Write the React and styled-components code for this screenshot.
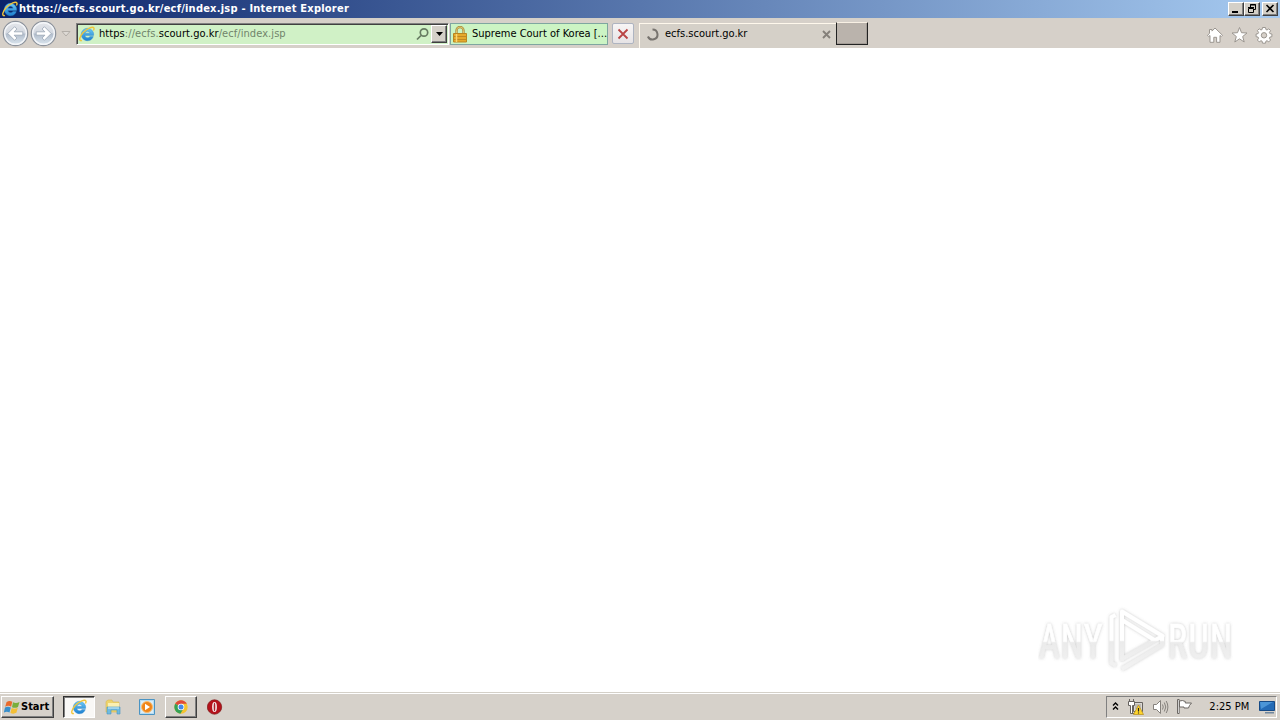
import React from 'react';
import styled, {createGlobalStyle} from "styled-components";

const GlobalStyle = createGlobalStyle`
  * {
    box-sizing: border-box;
  }

  body {
    margin: 0;
    overflow: hidden;
    background: #fff;
    font-family: "DejaVu Sans Condensed", "DejaVu Sans", sans-serif;
    font-stretch: condensed;
    font-size: 11px;
    color: #000;
  }

  svg {
    display: block;
    flex: none;
  }
`

const Desktop = styled.div`
  width: 1280px;
  height: 720px;
  display: flex;
  flex-direction: column;
`

const Text = styled.span`
  white-space: pre;
  line-height: 14px;
  font-weight: ${p => p.$bold ? 'bold' : 'normal'};
  letter-spacing: ${p => p.$spacing || 0}px;
  color: ${p => p.$color || 'inherit'};
`

const TitleBar = styled.div`
  height: 18px;
  flex: none;
  display: flex;
  align-items: center;
  gap: 1px;
  padding: 0 2px;
  background: linear-gradient(to right, #0a246a, #a6caf0);
  color: #fff;
`

const WindowButtons = styled.div`
  margin-left: auto;
  display: flex;
`

const WindowButton = styled.div`
  width: 16px;
  height: 14px;
  margin-left: ${p => p.$gap || 0}px;
  background: #d4d0c8;
  border: 1px solid;
  border-color: #fff #404040 #404040 #fff;
  box-shadow: inset -1px -1px #808080;
`

const Toolbar = styled.div`
  height: 30px;
  flex: none;
  display: flex;
  align-items: flex-start;
  padding: 4px 7px 0 2px;
  background: #d6d0c9;
  border-top: 1px solid #d4d0c8;
`

const NavButtons = styled.div`
  display: flex;
  gap: 1px;
  width: 74px;
  margin-top: -3px;
`

const AddressBar = styled.div`
  width: 373px;
  height: 22px;
  display: flex;
  align-items: center;
  padding-left: 2px;
  background: #d0f1c6;
  border: 1px solid;
  border-color: #808080 #fff #fff #808080;
  box-shadow: inset 1px 1px #404040;
`

const Url = styled.div`
  flex: 1;
  display: flex;
  padding: 0 0 0 4px;
`

const DropButton = styled.div`
  width: 16px;
  height: 18px;
  margin: 0 1px 0 1px;
  display: flex;
  align-items: center;
  justify-content: center;
  background: #d4d0c8;
  border: 1px solid;
  border-color: #fff #404040 #404040 #fff;
  box-shadow: inset -1px -1px #808080;
`

const Certificate = styled.div`
  width: 158px;
  height: 22px;
  margin-left: 1px;
  padding-left: 2px;
  display: flex;
  align-items: center;
  gap: 5px;
  background: #ccf4c4;
  border: 1px solid #7fa6a0;
`

const StopButton = styled.div`
  width: 22px;
  height: 21px;
  margin-left: 4px;
  display: flex;
  align-items: center;
  justify-content: center;
  background: linear-gradient(#f7f5f5, #e6e3e5);
  border: 1px solid #aeb4c1;
  border-radius: 2px;
`

const Tab = styled.div`
  width: 197px;
  height: 25px;
  margin-left: 5px;
  padding: 0 5px 4px 6px;
  display: flex;
  align-items: center;
  background: #d5d0c8;
  border-left: 1px solid #fff8ec;
  border-top: 1px solid #fff8ec;
`

const TabTitle = styled.div`
  flex: 1;
  display: flex;
  padding-left: 6px;
`

const NewTab = styled.div`
  width: 32px;
  height: 23px;
  margin-top: -1px;
  background: #bab3ac;
  border: 1px solid;
  border-color: #f8f0e4 #222 #222 #222;
  box-shadow: inset -1px -1px #a39c96;
`

const ToolIcons = styled.div`
  margin: 3px 0 0 auto;
  display: flex;
  gap: 7px;
`

const Page = styled.div`
  flex: 1;
  background: #fff;
  display: flex;
  justify-content: flex-end;
  align-items: flex-end;
  padding: 0 38px 14px 0;
`

const Taskbar = styled.div`
  height: 28px;
  flex: none;
  display: flex;
  align-items: center;
  padding: 2px 3px 2px 1px;
  background: #d6d1ca;
  border-top: 1px solid #d4d0c8;
  box-shadow: inset 0 1px #fff;
`

const StartButton = styled.div`
  width: 53px;
  height: 22px;
  display: flex;
  align-items: center;
  gap: 1px;
  padding-left: 2px;
  border: 1px solid;
  border-color: #fff #404040 #404040 #fff;
  box-shadow: inset -1px -1px #808080;
`

const Launchers = styled.div`
  display: flex;
  margin-left: 9px;
`

const Launcher = styled.div`
  width: 32px;
  height: 22px;
  margin-right: 2px;
  display: flex;
  align-items: center;
  justify-content: center;
  background: ${p => p.$state === 'active' ? '#f9f8f6' : 'none'};
  border: 1px solid transparent;
  border-color: ${p => ({
    active: '#303030 #fff #fff #303030',
    open: '#fff #404040 #404040 #fff'
})[p.$state]};
  box-shadow: ${p => p.$state === 'open' ? 'inset -1px -1px #808080' : p.$state ? 'inset 1px 1px #808080' : 'none'};
`

const Tray = styled.div`
  width: 171px;
  height: 22px;
  margin-left: auto;
  display: flex;
  align-items: center;
  padding: 0 1px 0 5px;
  border: 1px solid;
  border-color: #808080 #fff #fff #808080;
`

const TrayIcons = styled.div`
  display: flex;
  align-items: center;
  gap: 7px;
  width: 98px;
`

const Clock = styled.div`
  display: flex;
  width: 50px;
`

function IeIcon() {
    return (
        <svg width="16" height="16" viewBox="0 0 16 16">
            <defs>
                <linearGradient id="ie" x2="0" y2="1">
                    <stop stopColor="#6cc9f5"/>
                    <stop offset="1" stopColor="#1c7fd0"/>
                </linearGradient>
            </defs>
            <path d="M14.3 10.6H11a2.9 2.9 0 0 1-5.2-1.2h8.8A6.2 6.2 0 1 0 14.3 10.6ZM5.9 7.2a2.8 2.8 0 0 1 5.3 0Z" fill="url(#ie)" fillRule="evenodd" stroke="#2b86c9" strokeWidth=".4"/>
            <path d="M2.9 14.5C-.5 15.4.3 10.8 4.2 6.5 8.5 1.9 14 .1 14.9 2c.3.8 0 1.7-.5 2.5" fill="none" stroke="#f2c53a" strokeWidth="1.4"/>
        </svg>
    )
}

function NavArrow({flip}) {
    return (
        <svg width="27" height="27" viewBox="0 0 27 27">
            <defs>
                <linearGradient id="disc" x2="0" y2="1">
                    <stop stopColor="#e6e8ec"/>
                    <stop offset=".48" stopColor="#d3d8e0"/>
                    <stop offset=".52" stopColor="#b2bdcc"/>
                    <stop offset="1" stopColor="#dfeaf2"/>
                </linearGradient>
            </defs>
            <g transform={flip ? "translate(27 0) scale(-1 1)" : undefined}>
                <circle cx="13.5" cy="13.5" r="12.2" fill="url(#disc)" stroke="#8d939c" strokeWidth="1.2"/>
                <circle cx="13.5" cy="13.5" r="10.8" fill="none" stroke="#f4f6f9" strokeWidth="1.4"/>
                <path d="M5.8 13.5 12.6 6.7l2.3 2.3-2.8 2.8h8.7v3.4h-8.7l2.8 2.8-2.3 2.3Z" fill="#fff" stroke="#98a4b4" strokeWidth=".8"/>
            </g>
        </svg>
    )
}

function LockIcon() {
    return (
        <svg width="14" height="17" viewBox="0 0 14 17">
            <path d="M3.5 8V4.5a3.5 3.5 0 0 1 7 0V8" fill="none" stroke="#a58a3c" strokeWidth="2.3"/>
            <path d="M3.5 8V4.5a3.5 3.5 0 0 1 7 0V8" fill="none" stroke="#e6cc70" strokeWidth=".9"/>
            <path d="M.5 7.5h13v8.5H.5Z" fill="#e5a92c" stroke="#b9861f"/>
            <path d="M1 10.5h12M1 13.5h12" stroke="#c08820"/>
            <path d="M3.5 8v8" stroke="#f8d672" strokeWidth="1.5"/>
        </svg>
    )
}

function Watermark() {
    return (
        <svg width="204" height="74" viewBox="0 0 204 74">
            <defs>
                <linearGradient id="mark" y1="0" x2="0" y2="74" gradientUnits="userSpaceOnUse">
                    <stop offset=".49" stopColor="#fff"/>
                    <stop offset=".51" stopColor="#ebebeb"/>
                    <stop offset="1" stopColor="#f5f5f5"/>
                </linearGradient>
                <linearGradient id="letters" y1="-53" x2="0" y2="21" gradientUnits="userSpaceOnUse">
                    <stop offset=".49" stopColor="#fff"/>
                    <stop offset=".51" stopColor="#ebebeb"/>
                    <stop offset="1" stopColor="#f5f5f5"/>
                </linearGradient>
                <filter id="glow" x="-10%" y="-20%" width="120%" height="140%">
                    <feDropShadow dx="0" dy="0" stdDeviation="1.6" floodColor="#777" floodOpacity=".42"/>
                </filter>
            </defs>
            <g filter="url(#glow)">
                <g fill="url(#letters)" stroke="url(#letters)" strokeWidth=".7" fontFamily="Roboto" fontSize="49">
                    <text transform="translate(1 54) scale(.73 1)" textLength="87">ANY</text>
                    <text transform="translate(130 54) scale(.73 1)" textLength="88">RUN</text>
                </g>
                <g fill="none" stroke="url(#mark)" strokeWidth="4" strokeLinejoin="round">
                    <path d="M84 57V7.5L124.500 32 84 55"/>
                    <path d="M77.500 11 73.500 13v46l4.500 2.500M84 16l34 21M84 65l40-24v-8"/>
                </g>
            </g>
        </svg>
    )
}

function App() {
    return (
        <Desktop>
            <GlobalStyle />
            <TitleBar>
                <IeIcon />
                <Text $bold $spacing={0.22}>https://ecfs.scourt.go.kr/ecf/index.jsp - Internet Explorer</Text>
                <WindowButtons>
                    <WindowButton>
                        <svg width="14" height="12"><path d="M3 8h6v2H3Z"/></svg>
                    </WindowButton>
                    <WindowButton>
                        <svg width="14" height="12" fill="none" stroke="#000">
                            <path d="M5.5 4V1.5h5v5H9M5 2h6M3.5 5.5h5v4h-5ZM3 4.5h6"/>
                        </svg>
                    </WindowButton>
                    <WindowButton $gap={2}>
                        <svg width="14" height="12"><path d="m3.5 2 7 7m0-7-7 7" stroke="#000" strokeWidth="1.6"/></svg>
                    </WindowButton>
                </WindowButtons>
            </TitleBar>
            <Toolbar>
                <NavButtons>
                    <NavArrow />
                    <NavArrow flip />
                    <svg width="15" height="27"><path d="M4 11.500h8L8 16Z" fill="#dedad5" stroke="#b3aea8"/></svg>
                </NavButtons>
                <AddressBar>
                    <IeIcon />
                    <Url>
                        <Text $spacing={0.07}>https</Text>
                        <Text $spacing={0.07} $color="#71846b">://ecfs.</Text>
                        <Text $spacing={0.07}>scourt.go.kr</Text>
                        <Text $spacing={0.07} $color="#71846b">/ecf/index.jsp</Text>
                    </Url>
                    <svg width="15" height="15" fill="none" stroke="#667b61" strokeWidth="1.7">
                        <circle cx="9" cy="5.5" r="3.7"/>
                        <path d="m6 8.5-4 4"/>
                    </svg>
                    <DropButton>
                        <svg width="7" height="4"><path d="M0 0h7L3.5 4Z"/></svg>
                    </DropButton>
                </AddressBar>
                <Certificate>
                    <LockIcon />
                    <Text>Supreme Court of Korea [...</Text>
                </Certificate>
                <StopButton>
                    <svg width="12" height="12"><path d="m1.5 1.5 9 9m0-9-9 9" stroke="#b94444" strokeWidth="1.8"/></svg>
                </StopButton>
                <Tab>
                    <svg width="13" height="13"><path d="M6.5 1.5a5 5 0 1 1-4.6 7" fill="none" stroke="#77736e" strokeWidth="2"/></svg>
                    <TabTitle><Text>ecfs.scourt.go.kr</Text></TabTitle>
                    <svg width="9" height="9"><path d="m1 1 7 7m0-7L1 8" stroke="#85807a" strokeWidth="1.9"/></svg>
                </Tab>
                <NewTab />
                <ToolIcons>
                    <svg width="18" height="18" fill="#fff" stroke="#9b9690">
                        <path d="m1.5 9.3 2-1.9V3.5H6v1.6L9 2l7.5 7.3-1.2 1.2-1.3-1v6.8h-3.4v-5H7.8v5H4v-6.8l-1.3 1Z"/>
                    </svg>
                    <svg width="17" height="18" fill="#fff" stroke="#9b9690">
                        <path d="m8.5 1.500 2 5.2 5.5.3-4.3 3.5 1.5 5.5-4.7-3.2L3.8 16l1.5-5.5L1 7l5.5-.3Z"/>
                    </svg>
                    <svg width="18" height="18" viewBox="0 0 18 18" fill="#fff" stroke="#9b9690">
                        <path d="M7.5 1.5h3l.4 2 1.1.5 1.8-1.2 1.8 1.8-1.200 1.900.5 1.100 2 .4v2.700l-2 .4-.5 1.200 1.200 1.700-1.800 1.900-1.800-1.200-1.100.5-.4 2h-3l-.4-2-1.100-.5-1.800 1.200-1.800-1.900 1.200-1.700-.5-1.200-2-.4V8l2-.4.5-1.100-1.200-1.900 1.800-1.800L6 4l1.100-.5Z"/>
                        <circle cx="9" cy="9.300" r="2.700" fill="#d6d0c9"/>
                    </svg>
                </ToolIcons>
            </Toolbar>
            <Page>
                <Watermark />
            </Page>
            <Taskbar>
                <StartButton>
                    <svg width="16" height="16" viewBox="0 0 16 16">
                        <path d="M2.600 3q3-2.100 5.700-.2L7.100 7.700Q4.600 5.900 1.200 7.700Z" fill="#e96a2b"/>
                        <path d="M9 3.200q2.800 1.500 6.500-.2L14 8q-3.100 1.600-6 .2Z" fill="#79ae3c"/>
                        <path d="M1 8.500q3-1.700 5.800 0l-1.300 5Q2.800 12-.2 13.500Z" fill="#388fcb"/>
                        <path d="M7.700 9q3 1.500 6.100-.2l-1.400 5q-3 1.600-6 .1Z" fill="#f3bf36"/>
                    </svg>
                    <Text $bold>Start</Text>
                </StartButton>
                <Launchers>
                    <Launcher $state="active"><IeIcon /></Launcher>
                    <Launcher>
                        <svg width="16" height="16" viewBox="0 0 16 16">
                            <path d="M1 2.5 3 1h4l1 2h6v10H1Z" fill="#edd36d" stroke="#d8ba50" strokeWidth=".6"/>
                            <path d="M3 4h11v5H3Z" fill="#faf0b2"/>
                            <path d="M2 8h13v7h-3v-4H6v4H2Z" fill="#6fbbe0" stroke="#4795bf" strokeWidth=".6"/>
                            <path d="M3 9h11" stroke="#d4f0fa"/>
                        </svg>
                    </Launcher>
                    <Launcher>
                        <svg width="16" height="16" viewBox="0 0 16 16">
                            <path d="M.5.5h15v15H.5Z" fill="#b7dcf2" stroke="#4b94c3"/>
                            <path d="M2 2h12v12H2Z" fill="#d9edf8"/>
                            <circle cx="8" cy="8" r="5.500" fill="#ef8519" stroke="#fbbd70"/>
                            <path d="m6 4.7 5 3.3-5 3.3Z" fill="#fff"/>
                        </svg>
                    </Launcher>
                    <Launcher $state="open">
                        <svg width="16" height="16" viewBox="0 0 16 16">
                            <circle cx="8" cy="8" r="6.7" fill="#f4c430"/>
                            <path d="M8 8 2.2 4.7A6.7 6.7 0 0 1 13.8 4.7H8Z" fill="#df493b"/>
                            <path d="M2.2 4.7A6.7 6.7 0 0 0 7.4 14.7L10.5 9.5 8 8Z" fill="#35a155"/>
                            <circle cx="8" cy="8" r="3.3" fill="#fff"/>
                            <circle cx="8" cy="8" r="2.5" fill="#4388e9"/>
                        </svg>
                    </Launcher>
                    <Launcher>
                        <svg width="16" height="16" viewBox="0 0 16 16">
                            <circle cx="7.500" cy="8" r="7.2" fill="#b5121b" stroke="#7c1515" strokeWidth=".7"/>
                            <ellipse cx="7.500" cy="8" rx="2.4" ry="5" fill="#f7eeee"/>
                            <ellipse cx="7.500" cy="8" rx=".8" ry="4.2" fill="#a8202a"/>
                        </svg>
                    </Launcher>
                </Launchers>
                <Tray>
                    <TrayIcons>
                        <svg width="8" height="10" fill="none" stroke="#000" strokeWidth="1.4"><path d="m1 3.500 2.500-2.500L6 3.500M1 7.500l2.500-2.500L6 7.500"/></svg>
                        <svg width="18" height="16" viewBox="0 0 18 16">
                            <path d="M6.500 3.500h9v9h-9Z" fill="#dcd9d4" stroke="#66625f"/>
                            <path d="M8 5h6v5H8Z" fill="#bdbab5"/>
                            <path d="M1.500 2.500h6v4h-2v8h-2v-8h-2Z" fill="#fff" stroke="#66625f"/>
                            <path d="M2.500 0v3M6.500 0v3M5 14.500h5" stroke="#66625f"/>
                            <path d="m11.500 6 5 9.500h-10Z" fill="#ffd52b" stroke="#b58b1a" strokeWidth=".7"/>
                            <path d="M11.500 9v3.4m0 1v1" stroke="#222" strokeWidth="1.2"/>
                        </svg>
                        <svg width="17" height="16" viewBox="0 0 17 16" fill="none" stroke="#85817c">
                            <path d="M1.500 5.500h3l4-4v13l-4-4h-3Z" fill="#fff"/>
                            <path d="M10.500 5.500q1.500 2.500 0 5M12.300 3.500q3 4.500 0 9M14.200 2q3.400 6 0 12"/>
                        </svg>
                        <svg width="17" height="16" viewBox="0 0 17 16" fill="#fff" stroke="#6c6864">
                            <path d="M1.500.5h1.700v14H1.500ZM3.500 2q3-1.200 5.800.5v1.500h6.200L13.500 6.500l-1 2.500H8V8H3.500Z"/>
                        </svg>
                    </TrayIcons>
                    <Clock><Text>2:25 PM</Text></Clock>
                    <svg width="16" height="16" viewBox="0 0 16 16">
                        <path d="M.5 2.500h15v9H.5Z" fill="#246bb6" stroke="#164a86"/>
                        <path d="M1 3h13L2 10Z" fill="#4b95d7"/>
                        <path d="M6 13h9v1.500H6Z" fill="#70879e"/>
                    </svg>
                </Tray>
            </Taskbar>
        </Desktop>
    );
}

export default App;
